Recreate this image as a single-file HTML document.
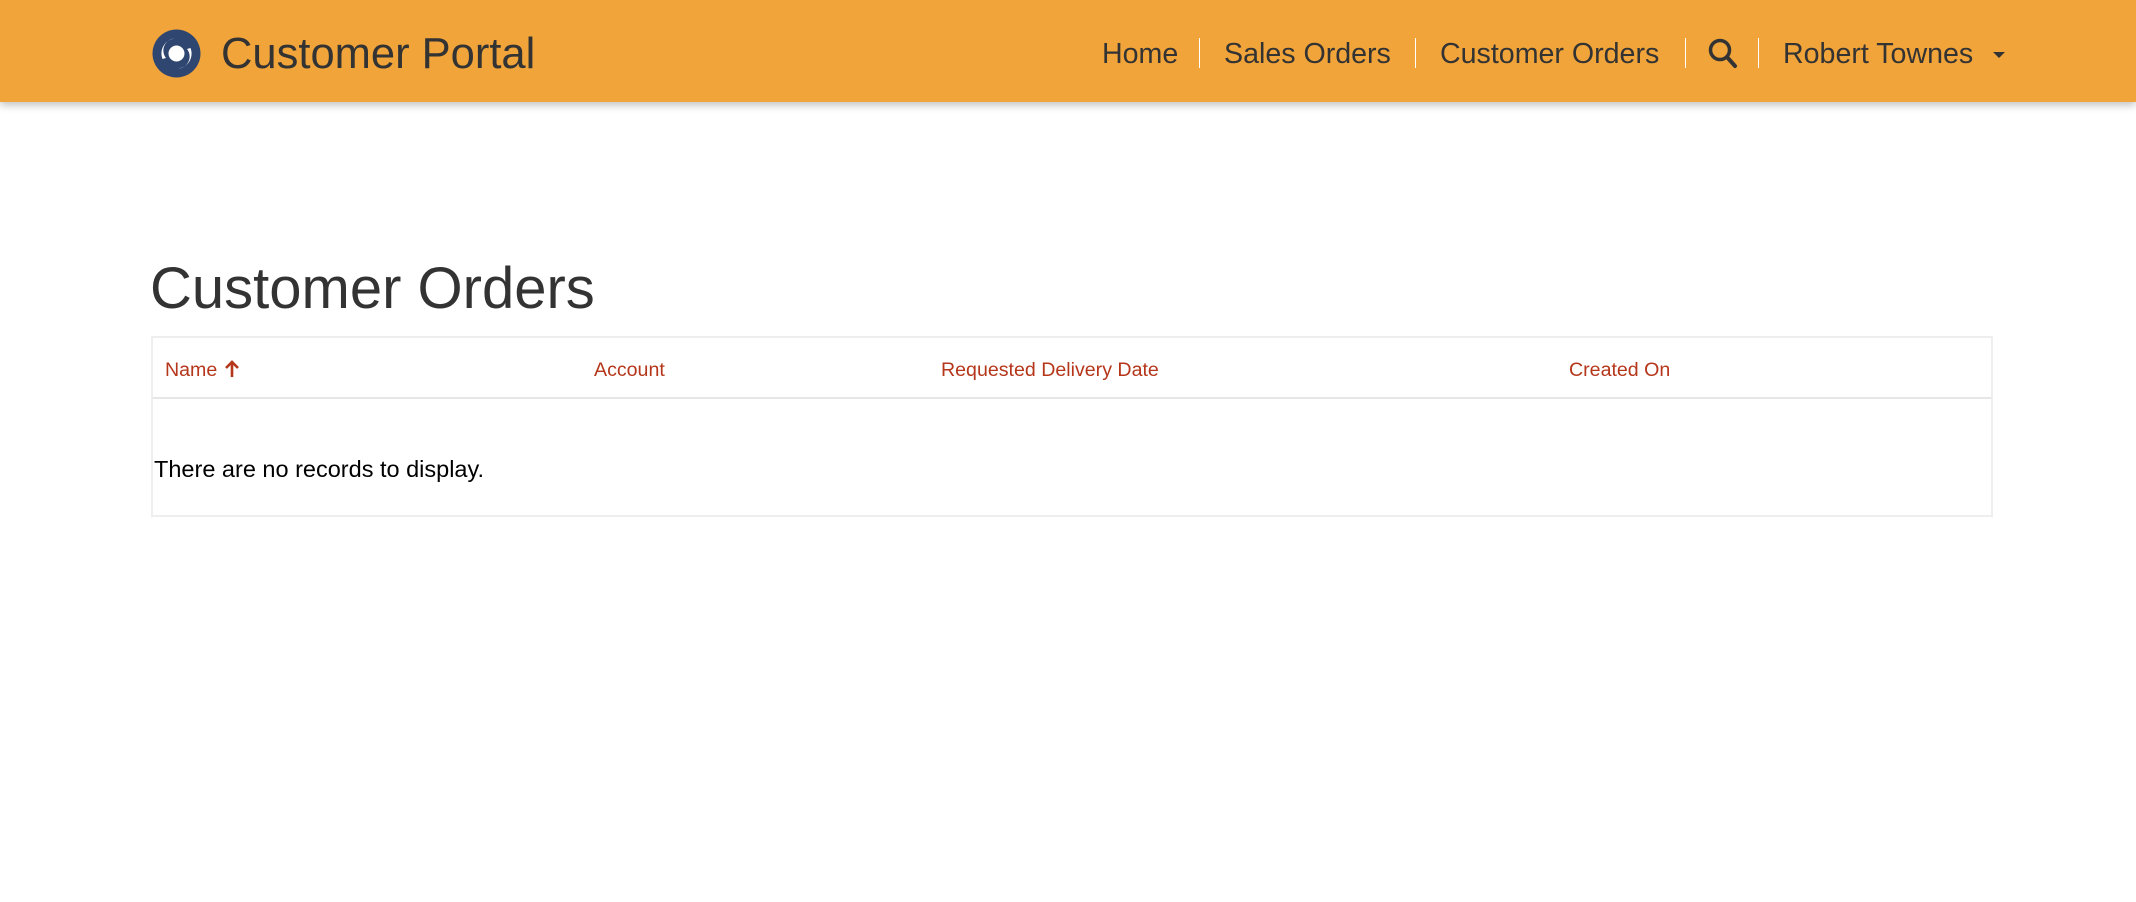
<!DOCTYPE html>
<html><head><meta charset="utf-8"><style>
*{box-sizing:border-box;margin:0;padding:0}
body{width:2136px;height:902px;background:#fff;font-family:"Liberation Sans",Arial,sans-serif;position:relative;overflow:hidden}
.hdr{position:absolute;left:0;top:0;width:2136px;height:102px;background:#F0A43A;box-shadow:0 3px 8px rgba(0,0,0,.25)}
.t{position:absolute;white-space:nowrap;color:#333}
.nav{font-size:28.6px;top:38px}
.sep{position:absolute;top:38px;width:1px;height:30px;background:#fff}
.th{position:absolute;top:359px;font-size:19.6px;color:#B5361A;white-space:nowrap}
</style></head><body>
<div class="hdr">
<svg style="position:absolute;left:152px;top:29px" width="49" height="49" viewBox="0 0 49 49">
<circle cx="24.5" cy="24.5" r="24" fill="#2F4670"/>
<path d="M10.5 30 A15 15 0 0 1 23 9.5 A12 12 0 0 0 14 29 Z" fill="#fff"/>
<path d="M38.5 19 A15 15 0 0 1 26 39.5 A12 12 0 0 0 35 20 Z" fill="#fff"/>
<circle cx="24.5" cy="24.5" r="8" fill="#fff"/>
</svg>
<div class="t" style="left:221px;top:30px;font-size:43.5px">Customer Portal</div>
<div class="t nav" style="left:1102px">Home</div>
<div class="sep" style="left:1199px"></div>
<div class="t nav" style="left:1224px">Sales Orders</div>
<div class="sep" style="left:1415px"></div>
<div class="t nav" style="left:1440px">Customer Orders</div>
<div class="sep" style="left:1685px"></div>
<svg style="position:absolute;left:1708px;top:38px" width="30" height="31" viewBox="0 0 30 31"><circle cx="12" cy="12" r="9.5" fill="none" stroke="#333" stroke-width="3.5"/><path d="M19 19 L27 28" stroke="#333" stroke-width="4" stroke-linecap="round"/></svg>
<div class="sep" style="left:1758px"></div>
<div class="t nav" style="left:1783px">Robert Townes</div>
<div style="position:absolute;left:1993px;top:52px;border-left:6px solid transparent;border-right:6px solid transparent;border-top:6px solid #333"></div>
</div>
<div class="t" style="left:150px;top:255px;font-size:58px">Customer Orders</div>
<div style="position:absolute;left:151px;top:336px;width:1842px;height:181px;border:2px solid #eee"></div>
<div style="position:absolute;left:153px;top:397px;width:1838px;height:2px;background:#e6e6e6"></div>
<div class="th" style="left:165px">Name</div>
<svg style="position:absolute;left:224px;top:359px" width="16" height="20" viewBox="0 0 16 20"><path d="M8 18 V3 M2 9 L8 3 L14 9" fill="none" stroke="#B5361A" stroke-width="2.6"/></svg>
<div class="th" style="left:594px">Account</div>
<div class="th" style="left:941px">Requested Delivery Date</div>
<div class="th" style="left:1569px">Created On</div>
<div class="t" style="left:154px;top:456px;font-size:23.5px;color:#000">There are no records to display.</div>
</body></html>
